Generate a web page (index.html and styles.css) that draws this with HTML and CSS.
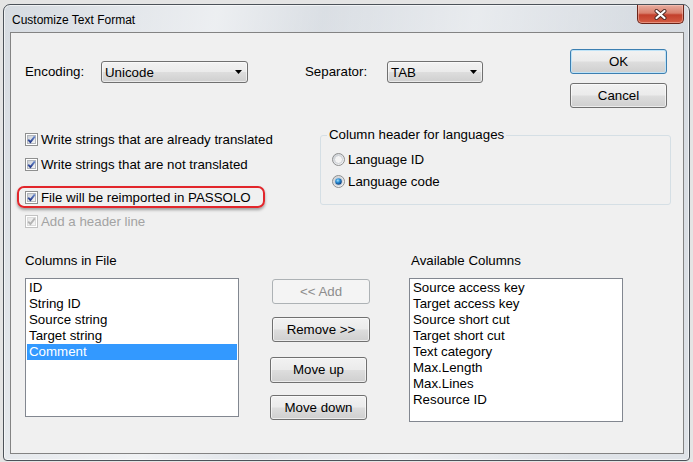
FILE: index.html
```html
<!DOCTYPE html>
<html>
<head>
<meta charset="utf-8">
<link rel="stylesheet" href="styles.css">
</head>
<body>
<svg class="defs" width="0" height="0" aria-hidden="true">
  <defs>
    <linearGradient id="cbInner" x1="0" y1="0" x2="1" y2="1">
      <stop offset="0" stop-color="#c9ced4"/>
      <stop offset="1" stop-color="#f7f7f7"/>
    </linearGradient>
    <linearGradient id="cbInnerDis" x1="0" y1="0" x2="1" y2="1">
      <stop offset="0" stop-color="#e6e6e6"/>
      <stop offset="1" stop-color="#f7f7f7"/>
    </linearGradient>
    <linearGradient id="chk" x1="0" y1="0" x2="0" y2="1">
      <stop offset="0" stop-color="#6f8fd0"/>
      <stop offset="1" stop-color="#23398a"/>
    </linearGradient>
    <linearGradient id="rdOuter" x1="0" y1="0" x2="1" y2="1">
      <stop offset="0" stop-color="#c9ced4"/>
      <stop offset="1" stop-color="#fbfbfb"/>
    </linearGradient>
    <radialGradient id="rdDot" cx="0.4" cy="0.35" r="0.65">
      <stop offset="0" stop-color="#a6e1fb"/>
      <stop offset="0.45" stop-color="#2b8fd6"/>
      <stop offset="1" stop-color="#0c3e7d"/>
    </radialGradient>
    <linearGradient id="closeBg" x1="0" y1="0" x2="0" y2="1">
      <stop offset="0" stop-color="#e9b0a3"/>
      <stop offset="0.45" stop-color="#d77663"/>
      <stop offset="0.55" stop-color="#c2432f"/>
      <stop offset="1" stop-color="#d2583e"/>
    </linearGradient>
  </defs>
</svg>
<div class="window">
  <div class="titlebar">
    <span class="title">Customize Text Format</span>
    <div class="close">
      <svg width="13" height="11" viewBox="0 0 13 11">
        <path d="M2.5 2 L10.5 9 M10.5 2 L2.5 9" stroke="#4b2a24" stroke-width="4" stroke-linecap="round"/>
        <path d="M2.5 2 L10.5 9 M10.5 2 L2.5 9" stroke="#ffffff" stroke-width="2.2" stroke-linecap="round"/>
      </svg>
    </div>
  </div>
  <div class="client">
    <div class="row-top">
      <div class="combos">
        <span class="lbl enc-lbl">Encoding:</span>
        <div class="combo enc"><span>Unicode</span><svg class="arrow" width="7" height="4" viewBox="0 0 7 4"><polygon points="0,0 7,0 3.5,4" fill="#000"/></svg></div>
        <span class="lbl sep-lbl">Separator:</span>
        <div class="combo sep"><span>TAB</span><svg class="arrow" width="7" height="4" viewBox="0 0 7 4"><polygon points="0,0 7,0 3.5,4" fill="#000"/></svg></div>
      </div>
      <div class="btn-col">
        <div class="btn default">OK</div>
        <div class="btn cancel">Cancel</div>
      </div>
    </div>

    <div class="row-mid">
      <div class="checks">
        <div class="check">
          <svg class="cb" width="13" height="13" viewBox="0 0 13 13"><rect x="0.5" y="0.5" width="12" height="12" fill="#fff" stroke="#8e8f8f"/><rect x="2.5" y="2.5" width="8" height="8" fill="url(#cbInner)" stroke="#b3b7bd"/><path d="M3.2 6.6 L5.4 9 L9.8 3.4" fill="none" stroke="url(#chk)" stroke-width="1.9"/></svg>
          <span>Write strings that are already translated</span>
        </div>
        <div class="check c2">
          <svg class="cb" width="13" height="13" viewBox="0 0 13 13"><rect x="0.5" y="0.5" width="12" height="12" fill="#fff" stroke="#8e8f8f"/><rect x="2.5" y="2.5" width="8" height="8" fill="url(#cbInner)" stroke="#b3b7bd"/><path d="M3.2 6.6 L5.4 9 L9.8 3.4" fill="none" stroke="url(#chk)" stroke-width="1.9"/></svg>
          <span>Write strings that are not translated</span>
        </div>
        <div class="check marked">
          <svg class="cb" width="13" height="13" viewBox="0 0 13 13"><rect x="0.5" y="0.5" width="12" height="12" fill="#fff" stroke="#8e8f8f"/><rect x="2.5" y="2.5" width="8" height="8" fill="url(#cbInner)" stroke="#b3b7bd"/><path d="M3.2 6.6 L5.4 9 L9.8 3.4" fill="none" stroke="url(#chk)" stroke-width="1.9"/></svg>
          <span>File will be reimported in PASSOLO</span>
        </div>
        <div class="check c4 disabled">
          <svg class="cb" width="13" height="13" viewBox="0 0 13 13"><rect x="0.5" y="0.5" width="12" height="12" fill="#fff" stroke="#c2c2c2"/><rect x="2.5" y="2.5" width="8" height="8" fill="url(#cbInnerDis)" stroke="#dcdcdc"/><path d="M3.2 6.6 L5.4 9 L9.8 3.4" fill="none" stroke="#b4b4b4" stroke-width="1.9"/></svg>
          <span>Add a header line</span>
        </div>
      </div>
      <div class="group">
        <div class="group-title">Column header for languages</div>
        <div class="radio r1">
          <svg width="13" height="13" viewBox="0 0 13 13"><circle cx="6.5" cy="6.5" r="6" fill="url(#rdOuter)" stroke="#8e8f8f"/><circle cx="6.5" cy="6.5" r="4" fill="#f4f4f4" stroke="#c4c8cd" stroke-width="0.8"/></svg>
          <span>Language ID</span>
        </div>
        <div class="radio r2">
          <svg width="13" height="13" viewBox="0 0 13 13"><circle cx="6.5" cy="6.5" r="6" fill="url(#rdOuter)" stroke="#8e8f8f"/><circle cx="6.5" cy="6.5" r="4" fill="#f4f4f4" stroke="#c4c8cd" stroke-width="0.8"/><circle cx="6.5" cy="6.5" r="3.3" fill="url(#rdDot)"/></svg>
          <span>Language code</span>
        </div>
      </div>
    </div>

    <div class="row-bottom">
      <div class="col-list">
        <div class="lbl list-lbl">Columns in File</div>
        <div class="listbox lb1">
          <div class="item">ID</div>
          <div class="item">String ID</div>
          <div class="item">Source string</div>
          <div class="item">Target string</div>
          <div class="item selected">Comment</div>
        </div>
      </div>
      <div class="col-btns">
        <div class="btn disabled b-add">&lt;&lt; Add</div>
        <div class="btn b-remove">Remove &gt;&gt;</div>
        <div class="btn b-up">Move up</div>
        <div class="btn b-down">Move down</div>
      </div>
      <div class="col-list col-avail">
        <div class="lbl list-lbl">Available Columns</div>
        <div class="listbox lb2">
          <div class="item">Source access key</div>
          <div class="item">Target access key</div>
          <div class="item">Source short cut</div>
          <div class="item">Target short cut</div>
          <div class="item">Text category</div>
          <div class="item">Max.Length</div>
          <div class="item">Max.Lines</div>
          <div class="item">Resource ID</div>
        </div>
      </div>
    </div>
  </div>
</div>
</body>
</html>
```

FILE: styles.css
```css
html, body {
  margin: 0;
  padding: 0;
}
body {
  width: 693px;
  height: 462px;
  overflow: hidden;
  background: #e4e4e4;
  font-family: "Liberation Sans", Arial, sans-serif;
  font-size: 13.3px;
  color: #000;
}
.defs {
  display: block;
  width: 0;
  height: 0;
  overflow: hidden;
}
.window {
  box-sizing: border-box;
  width: 687px;
  height: 457px;
  margin: 4px 0 0 3px;
  border: 1px solid #4c5259;
  border-radius: 7px 7px 4px 4px;
  padding: 0 5px 6px 6px;
  display: flex;
  flex-direction: column;
  background:
    linear-gradient(100deg, rgba(255,255,255,0) 0%, rgba(255,255,255,0.55) 28%, rgba(255,255,255,0.1) 42%, rgba(255,255,255,0.45) 62%, rgba(255,255,255,0) 85%),
    linear-gradient(#d6dbe1, #dfe3e8);
  box-shadow: inset 0 0 0 1px rgba(255,255,255,0.6);
}
.titlebar {
  height: 27px;
  display: flex;
  align-items: flex-start;
  flex: none;
}
.title {
  font-family: "Liberation Sans", Arial, sans-serif;
  font-size: 12px;
  line-height: 14px;
  margin: 8px 0 0 2px;
  color: #000;
}
.close {
  margin-left: auto;
  width: 47px;
  height: 19px;
  box-sizing: border-box;
  border: 1px solid #6a2419;
  border-top: none;
  border-radius: 0 0 5px 5px;
  background: linear-gradient(#e8ad9f 0%, #d9806d 45%, #c3402c 55%, #d45c43 100%);
  box-shadow: inset 0 0 0 1px rgba(255,210,200,0.45);
  display: flex;
  align-items: center;
  justify-content: center;
}
.client {
  flex: 1;
  box-sizing: border-box;
  border: 1px solid #838383;
  background: #f0f0f0;
  padding: 16px 0 0 14px;
  display: flex;
  flex-direction: column;
}
.lbl {
  line-height: 16px;
}
.row-top {
  display: flex;
  height: 59px;
  flex: none;
}
.combos {
  display: flex;
  align-items: center;
  height: 22px;
  margin-top: 12px;
}
.enc-lbl {
  width: 76px;
}
.sep-lbl {
  width: 82px;
  margin-left: 57px;
}
.combo {
  box-sizing: border-box;
  height: 22px;
  border: 1px solid #707070;
  border-radius: 3px;
  background: linear-gradient(#f2f2f2 0%, #ebebeb 48%, #dddddd 52%, #cfcfcf 100%);
  box-shadow: inset 0 0 0 1px rgba(255,255,255,0.55);
  display: flex;
  align-items: center;
  padding: 0 5px 0 3px;
}
.combo .arrow {
  margin-left: auto;
}
.enc { width: 147px; }
.sep { width: 96px; }
.btn-col {
  margin-left: auto;
  margin-right: 16px;
  width: 97px;
  display: flex;
  flex-direction: column;
}
.btn {
  box-sizing: border-box;
  height: 25px;
  border: 1px solid #707070;
  border-radius: 3px;
  background: linear-gradient(#f2f2f2 0%, #ebebeb 48%, #dddddd 52%, #cfcfcf 100%);
  box-shadow: inset 0 0 0 1px rgba(255,255,255,0.6);
  display: flex;
  align-items: center;
  justify-content: center;
  line-height: 16px;
}
.btn.default {
  border-color: #3c7fb1;
  box-shadow: inset 0 0 0 1px #bfe3f7;
}
.btn.cancel {
  margin-top: 9px;
}
.btn.disabled {
  border-color: #adb2b5;
  background: #f4f4f4;
  box-shadow: none;
  color: #8d8d8d;
}
.row-mid {
  display: flex;
  height: 123px;
  flex: none;
}
.checks {
  width: 295px;
  padding-top: 21px;
  display: flex;
  flex-direction: column;
}
.check {
  display: flex;
  align-items: center;
  height: 20px;
  gap: 3px;
}
.check .cb {
  flex: none;
}
.check.c2 {
  margin-top: 5px;
}
.check.marked {
  box-sizing: border-box;
  width: 248px;
  height: 22px;
  margin: 12px 0 0 -8px;
  padding-left: 6px;
  border: 2px solid #e2262b;
  border-radius: 7px;
  box-shadow: 0 2px 3px rgba(0,0,0,0.35);
}
.check.c4 {
  margin-top: 3px;
}
.check.disabled {
  color: #a3a3a3;
}
.group {
  box-sizing: border-box;
  width: 351px;
  height: 70px;
  margin-top: 27px;
  border: 1px solid #d5dfe5;
  border-radius: 3px;
  padding-left: 11px;
  display: flex;
  flex-direction: column;
  align-items: flex-start;
}
.group-title {
  line-height: 16px;
  margin: -9px 0 0 -5px;
  padding: 0 2px;
  background: #f0f0f0;
}
.radio {
  display: flex;
  align-items: center;
  height: 20px;
  gap: 3px;
}
.radio.r1 { margin-top: 6px; }
.radio.r2 { margin-top: 2px; }
.row-bottom {
  display: flex;
  margin-top: 22px;
}
.col-list {
  width: 214px;
  display: flex;
  flex-direction: column;
}
.col-avail {
  margin-left: 39px;
}
.col-avail .list-lbl {
  padding-left: 2px;
}
.listbox {
  box-sizing: border-box;
  margin-top: 9px;
  border: 1px solid #828790;
  background: #fff;
  padding: 1px;
}
.lb1 { height: 139px; }
.lb2 { height: 144px; }
.item {
  line-height: 16px;
  height: 16px;
  padding-left: 2px;
  white-space: nowrap;
}
.item.selected {
  background: #3399ff;
  color: #fff;
}
.col-btns {
  margin-left: 31px;
  width: 100px;
  padding-top: 26px;
  display: flex;
  flex-direction: column;
}
.b-add {
  margin-left: 2px;
  width: 98px;
}
.b-remove {
  margin: 13px 0 0 2px;
  width: 98px;
}
.b-up {
  margin-top: 15px;
  width: 97px;
  height: 26px;
}
.b-down {
  margin-top: 12px;
  width: 97px;
}
```
